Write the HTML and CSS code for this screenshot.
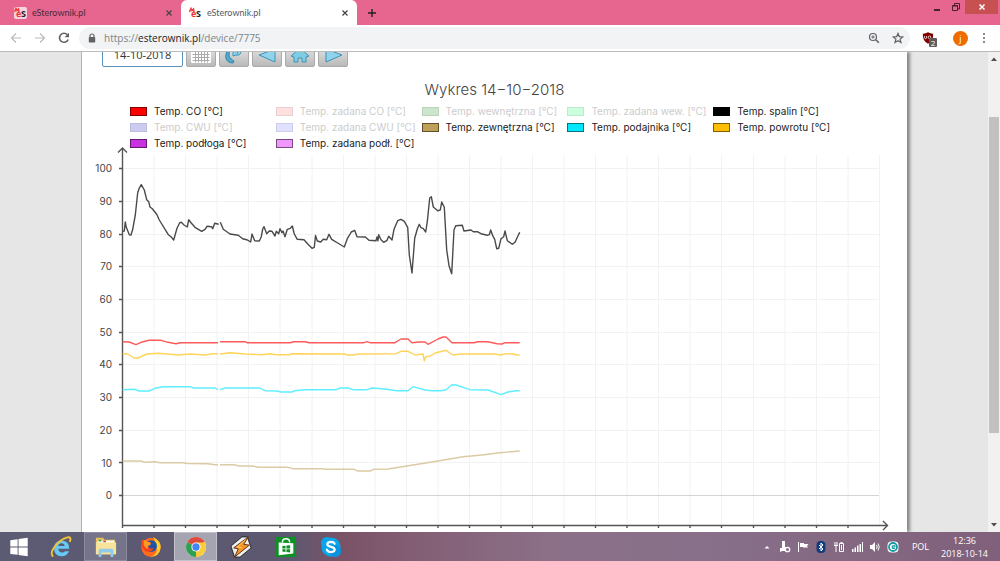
FILE: index.html
```
<!DOCTYPE html>
<html lang="pl">
	<head>
		<meta charset="UTF-8" />
		<meta name="viewport" content="width=device-width, initial-scale=1.0" />
		<title>eSterownik.pl</title>
		<link rel="stylesheet" href="styles.css">
	</head>
	<body>
		<header class="tabs">
			<div class="tab">
				<svg class="favicon" viewBox="0 0 13 12"><rect width="13" height="12" rx="2" fill="#f6d3df"/><path d="M.5 5L2 1.500l1 2L4.500 2l.5 3" fill="none" stroke="#f03a3a" stroke-width="1.500"/><text x="2" y="10" class="fav-e">e</text><text x="7" y="10" class="fav-s">S</text></svg>
				<span class="tab-name">eSterownik.pl</span>
				<button class="tab-close" aria-label="Zamknij kartę"><svg viewBox="0 0 8 8"><path d="M1.5 1.5l5 5m0-5l-5 5"/></svg></button>
			</div>
			<div class="tab active">
				<svg class="favicon" viewBox="0 0 13 12"><path d="M.5 5L2 1.500l1 2L4.500 2l.5 3" fill="none" stroke="#f03a3a" stroke-width="1.500"/><text x="2" y="10" class="fav-e">e</text><text x="7" y="10" class="fav-s">S</text></svg>
				<span class="tab-name">eSterownik.pl</span>
				<button class="tab-close" aria-label="Zamknij kartę"><svg viewBox="0 0 8 8"><path d="M1.5 1.5l5 5m0-5l-5 5"/></svg></button>
			</div>
			<button class="new-tab" aria-label="Nowa karta"><svg viewBox="0 0 10 10"><path d="M5 1v8M1 5h8"/></svg></button>
			<div class="window-buttons">
				<button aria-label="Minimalizuj"><svg viewBox="0 0 10 10"><path d="M2 8h6" stroke-width="2"/></svg></button>
				<button aria-label="Przywróć"><svg viewBox="0 0 10 10"><path d="M3.500 3V1.500h5V7H7M1.500 3.500h5v5h-5zM1.500 4h5"/></svg></button>
				<button class="window-close" aria-label="Zamknij"><svg viewBox="0 0 10 10"><path d="M2.500 2.500l5 5m0-5l-5 5" stroke-width="1.500"/></svg></button>
			</div>
		</header>

		<nav class="toolbar">
			<button class="nav muted" aria-label="Wstecz"><svg viewBox="0 0 12 12"><path d="M11 6H1.500M6 1.500L1.500 6 6 10.500"/></svg></button>
			<button class="nav muted" aria-label="Dalej"><svg viewBox="0 0 12 12"><path d="M1 6h9.500M6 1.500L10.500 6 6 10.500"/></svg></button>
			<button class="nav" aria-label="Odśwież"><svg viewBox="0 0 12 12"><path d="M10.200 7.500a4.500 4.500 0 1 1-.8-4.700" stroke-width="1.600"/><path d="M11 .8v4.400H6.600z" class="solid"/></svg></button>
			<div class="address">
				<svg class="lock" viewBox="0 0 8 10"><path d="M2 4.500V3a2 2 0 0 1 4 0v1.500" fill="none" stroke="#5f6368" stroke-width="1.200"/><rect x="0.800" y="4" width="6.400" height="5.500" rx="0.800" fill="#5f6368"/></svg>
				<span class="url">https://<b>esterownik.pl</b>/device/7775</span>
				<button class="nav" aria-label="Powiększenie"><svg viewBox="0 0 12 12"><circle cx="5" cy="5" r="3.500"/><path d="M7.800 7.800l3 3" stroke-width="1.600"/><path d="M3.300 5h3.400M5 3.300v3.400" stroke-width="1"/></svg></button>
				<button class="nav" aria-label="Zakładka"><svg viewBox="0 0 12 12"><path d="M6 1.400l1.300 3.200 3.500.3-2.700 2.200.9 3.400L6 8.700l-3 1.800.9-3.400L1.200 4.900l3.500-.3z"/></svg></button>
			</div>
			<button class="ublock" aria-label="uBlock"><svg viewBox="0 0 12 12"><path d="M6 .3q2.500 1.500 5.200 1.400Q11.500 9 6 11.800.500 9 .8 1.700 3.500 1.800 6 .3z" fill="#800000"/><path d="M2.600 4v1.600q0 1 1 1t1-1V4" fill="none" stroke="#fff" stroke-width=".8"/><circle cx="7.500" cy="5.300" r="1.300" fill="none" stroke="#fff" stroke-width=".8"/></svg><span class="count">2</span></button>
			<button class="avatar">j</button>
			<button class="more" aria-label="Menu"><svg viewBox="0 0 4 12"><circle cx="2" cy="2" r="1"/><circle cx="2" cy="6" r="1"/><circle cx="2" cy="10" r="1"/></svg></button>
		</nav>

		<div class="viewport">
			<main class="page">
				<form class="date-bar">
					<input class="date" type="text" value="14-10-2018" aria-label="Data" />
					<button type="button" aria-label="Kalendarz"><svg viewBox="0 0 28 20"><rect x="4" y="1" width="20" height="16" rx="1" fill="#fff"/><path d="M4 2h20v4H4z" fill="#5fb4d2"/><path d="M5.500 8.500h17m-17 3h17m-17 3h17M8.500 6v10.500m3-10.500v10.500m3-10.500v10.500m3-10.500v10.500m3-10.500v10.500" stroke="#aaa"/></svg></button>
					<button type="button" aria-label="Odśwież"><svg viewBox="0 0 28 20"><path d="M13 17C5 17 4 9 8 4l2 1c-2 4-1 7 4 10z" fill="#4fa9cd" stroke="#3284ab"/><path d="M13 10V5l3 1 3-3 2 3q-1 4-5 3zM17 3q2 3 0 5" fill="#8fd4ea" stroke="#3c93b9"/></svg></button>
					<button type="button" aria-label="Poprzedni dzień"><svg viewBox="0 0 28 20"><path d="M6 9L22 3v13z" fill="#91d3ea" stroke="#3c93b9"/></svg></button>
					<button type="button" aria-label="Dzisiaj"><svg viewBox="0 0 28 20"><path d="M14 2l9 8-3 1v5h-4v-4h-4v4H8v-5l-3-1z" fill="#7ecde2" stroke="#3c93b9"/></svg></button>
					<button type="button" aria-label="Następny dzień"><svg viewBox="0 0 28 20"><path d="M23 9L7 3v13z" fill="#91d3ea" stroke="#3c93b9"/></svg></button>
				</form>

				<h1>Wykres 14−10−2018</h1>

				<ul class="legend">
					<li><i class="swatch co"></i>Temp. CO [°C]</li>
					<li class="off"><i class="swatch co-set"></i>Temp. zadana CO [°C]</li>
					<li class="off"><i class="swatch inside"></i>Temp. wewnętrzna [°C]</li>
					<li class="off"><i class="swatch inside-set"></i>Temp. zadana wew. [°C]</li>
					<li><i class="swatch fumes"></i>Temp. spalin [°C]</li>
					<li class="off"><i class="swatch cwu"></i>Temp. CWU [°C]</li>
					<li class="off"><i class="swatch cwu-set"></i>Temp. zadana CWU [°C]</li>
					<li><i class="swatch outside"></i>Temp. zewnętrzna [°C]</li>
					<li><i class="swatch feeder"></i>Temp. podajnika [°C]</li>
					<li><i class="swatch return"></i>Temp. powrotu [°C]</li>
					<li><i class="swatch floor"></i>Temp. podłoga [°C]</li>
					<li><i class="swatch floor-set"></i>Temp. zadana podł. [°C]</li>
				</ul>

				<svg class="chart" viewBox="82 149 825 390" role="img" aria-label="Wykres temperatur">
					<!-- one line per hour, one line per 10 degrees -->
					<path class="grid" d="M154 155v370M185.500 155v370M217 155v370M248.500 155v370M280 155v370M312 155v370M343.500 155v370M375 155v370M406.500 155v370M438 155v370M469.500 155v370M501 155v370M532.500 155v370M564 155v370M595.500 155v370M627 155v370M658.500 155v370M690 155v370M721.500 155v370M753.500 155v370M785 155v370M816.500 155v370M848 155v370M879.500 155v370"/>
					<path class="grid" d="M122 168.500h757M122 201.500h757M122 234.500h757M122 266.500h757M122 299.500h757M122 332.500h757M122 364.500h757M122 397.500h757M122 430.500h757M122 462.500h757"/>
					<path class="zero" d="M122 495.500h757"/>
					<path class="axis" d="M122.500 525V148M118 152.500l4.500-4.500 4.500 4.500M122 525.500h765M883 521l4.500 4.500-4.500 4.500"/>
					<path class="axis" d="M119 168.500h3M119 201.500h3M119 234.500h3M119 266.500h3M119 299.500h3M119 332.500h3M119 364.500h3M119 397.500h3M119 430.500h3M119 462.500h3M119 495.500h3"/>
					<path class="axis" d="M122.500 525v3M154 525v3M185.500 525v3M217 525v3M248.500 525v3M280 525v3M312 525v3M343.500 525v3M375 525v3M406.500 525v3M438 525v3M469.500 525v3M501 525v3M532.500 525v3M564 525v3M595.500 525v3M627 525v3M658.500 525v3M690 525v3M721.500 525v3M753.500 525v3M785 525v3M816.500 525v3M848 525v3"/>
					<g class="scale">
						<text x="112" y="172">100</text>
						<text x="112" y="205">90</text>
						<text x="112" y="238">80</text>
						<text x="112" y="270">70</text>
						<text x="112" y="303">60</text>
						<text x="112" y="336">50</text>
						<text x="112" y="368">40</text>
						<text x="112" y="401">30</text>
						<text x="112" y="434">20</text>
						<text x="112" y="467">10</text>
						<text x="112" y="499">0</text>
					</g>
					<path class="line fumes-line" d="M122.700 231.300L124.300 231 125.300 222 126.300 227.300 129.300 234.700 131 235 132.700 229.300 135.300 215 137.700 192.700 139.300 188 141.300 184.700 144.300 190 146.700 199.700 148.700 201.700 150 207 152.300 208.700 156.700 214.300 159.300 220 168.300 234.700 171 236.700 173.700 240 177 228.300 179.700 222.700 181.300 222.300 184 225 187.300 227 188.700 219.700 191 222.700 195 227.300 201.700 231.300 205 229.300 207 226.300 211.500 226.700 212.700 228.700 214.700 223.300 218.700 224.300M220.300 222.300L223.300 229.300 230 234 238.300 235.300 242.700 238.700 246.700 239.700 250.700 242 252 234 254.700 240.700 259.300 241 261.300 236.700 262.700 229 264 226.700 266.700 233.700 269.300 231 272 231.300 275 236 276.300 231.300 278.700 233.700 280 228.700 282 232.700 283 231 285 236.700 287.300 229.300 290.300 228.300 292.300 226 294.300 234 297.300 239.300 304 239.700 308 244.300 312 248.300 314.300 247.300 315.500 235.500 317.300 241 320.700 242 323.300 239.300 326.700 239.700 329 234.300 331.700 239.300 337.700 243 344.300 247 347.300 238.700 351.300 232 354.700 230.300 357 236.700 365.300 237 369 240.300 376 240.700 377 237 378 240.700 378.700 234.700 381 239.700 383.700 242.300 387 240.300 388.700 236.300 392 240 394 229.300 397.700 220.700 401 219.300 404.300 221.300 407.700 227.300 409.300 255 412 273 414.700 238.300 417.300 229 419.300 224.300 421 227.700 423.300 228.700 425.700 232 427.300 221.700 429.700 198 431.300 196.700 433.300 207 437.700 210.700 440.300 210 441.700 202 444.300 207.300 446.700 250 449 265.700 451.700 273.700 454 230 455.700 225.700 462.300 225.300 464 231 471 230 473.300 231.700 477.300 231.700 481 233.700 487.300 235.300 489.300 234.700 490.700 230 492.700 235.700 494.700 239.300 496.700 248.700 498.700 248.300 501 238.700 503.700 236.700 505 231 507.300 240.700 512.300 244.300 515 242.300 519.700 232.300"/>
					<path class="line co-line" d="M122.700 341.700L129 342 136 344.700 141 342.300 149 340.300 161 340.300 168 342.300 176 343.700 180 342.700 218 342.700M220 341.700L245 341.700 247 342.700 290 342.700 294 341.700 305 341.700 309 342.700 364 342.700 367 341.700 370 342.700 395 342.700 401 339 408 339 412 342.700 419 342 425 342 428 344.300 438 339 443 337 446 337 452 342.700 474 342.700 478 341.700 488 341.700 497 343.700 502 344 505 342.700 519.700 342.700"/>
					<path class="line return-line" d="M122.700 353.700L128 354 134 358 138 358 147 354 158 353.300 170 354.300 178 355 190 354 205 355 213 353.700 218 353.700M220 354L230 352.700 245 354 262 354.700 270 353.700 276 354.700 289 354.700 293 353.700 344 354 348 355 354 355 358 354 396 353.700 401 351.300 408 351.300 415 355 423 354 424.300 361 425.500 357 430 356 436 352.700 446 350.300 453 355 460 354 495 354 500 355 506 353.700 514 354 516 355 519.700 355"/>
					<path class="line feeder-line" d="M122.700 389.700L135 389.300 139 391 149 391 155 388.300 163 386.700 190 386.700 194 388 215 388 218 389.700M220 389.700L225 388 260 388 265 390.700 277 391 281 392 292 392 295 390.700 305 389.700 336 389.700 341 388 348 388 353 389.700 367 389.700 372 388 385 389 390 389.700 397 390.700 408 390.700 413 386.700 425 390 432 390.700 441 390.700 446 389.700 452 384.700 456 385 470 389.700 488 390 501 394.700 508 392 516 390.700 519.700 390.700"/>
					<path class="line outside-line" d="M122.700 461L141 461 145 462.300 155 461.700 160 462.700 183 462.700 187 463.500 208 463.700 215 464.700 218 464.700M220 464.700L234 464.700 239 466 253 466 258 467.300 288 467.300 293 468.700 322 468.700 327 469.300 354 469.300 358 471 370 471 374 469.300 388 469 410 465.500 438 461 463 456.700 482 455 500 452.700 519.700 451"/>
				</svg>
			</main>
			<div class="scrollbar">
				<svg viewBox="0 0 8 6"><path d="M1 5l3-3.500L7 5z"/></svg>
				<span class="thumb"></span>
				<svg viewBox="0 0 8 6"><path d="M1 1l3 3.500L7 1z"/></svg>
			</div>
		</div>

		<footer class="taskbar">
			<button class="app" aria-label="Start"><svg viewBox="0 0 24 24"><path d="M2.500 4.500l8-1v8h-8zM11.500 3.300l10-1.300v9.500h-10zM2.500 12.500h8v8l-8-1zM11.500 12.500h10V22l-10-1.300z" fill="#fff"/></svg></button>
			<button class="app" aria-label="Internet Explorer"><svg viewBox="0 0 24 24"><path d="M21 14H9q.3 4 4.200 4 2.300 0 3.300-1.500h4.200q-2 5.500-8 5.500Q4.500 21.500 4.500 13.500t8-8.500Q21 5.500 21 14zM9 11h7q-.5-3-3.500-3T9 11z" fill="#67caf5"/><path d="M3.500 22.500C-2 18 9 4 19 1.500q5-1 2.500 5" fill="none" stroke="#f3c433" stroke-width="2"/></svg></button>
			<button class="app open" aria-label="Eksplorator plików"><svg viewBox="0 0 24 24"><path d="M1 2h8l1 2h12v16H1z" fill="#e9c35c"/><path d="M3 5h18v3H3z" fill="#fff"/><path d="M4 4h3v2H4z" fill="#4ca545"/><path d="M9 5h3v2H9z" fill="#d54b35"/><path d="M1 7h22v13H1z" fill="#f8e39a"/><path d="M4 23v-7q0-2 2-2h12q2 0 2 2v7h-3v-5H7v5z" fill="#8fcbea"/></svg></button>
			<button class="app" aria-label="Firefox"><svg viewBox="0 0 24 24"><circle cx="12" cy="12.500" r="10.500" fill="#ff6a1f"/><path d="M14 1q9 4 8.500 12Q21 22.500 11 22.500q9-2 7-10Q17 5 14 1z" fill="#ffce2e"/><circle cx="12" cy="11" r="6.500" fill="#1d55a5"/><path d="M1.500 4L7 6l5 1q0 3-3 3 0 5 6 3-2 5-7 4T1.500 10z" fill="#f9431d"/><path d="M4 4l4 2q5 1 3 4-4 0-2 4-4-1-5-5z" fill="#ff9b21"/></svg></button>
			<button class="app open current" aria-label="Chrome"><svg viewBox="0 0 24 24"><circle cx="12" cy="12" r="11" fill="#fff"/><path d="M12 12L2.500 6.500a11 11 0 0 1 19 0z" fill="#de4b3c"/><path d="M12 12l9.500-5.500A11 11 0 0 1 12 23z" fill="#fbcc3a"/><path d="M12 12v11A11 11 0 0 1 2.500 6.500z" fill="#2ea052"/><path d="M12 7h9.700L12 23l4.300-8.500z" fill="#fbcc3a"/><circle cx="12" cy="12" r="5" fill="#fff"/><circle cx="12" cy="12" r="4" fill="#4286f2"/></svg></button>
			<button class="app" aria-label="Winamp"><svg viewBox="0 0 24 24"><path d="M1 11L13 1h6l4 12-12 10H5z" fill="#eee" stroke="#222"/><path d="M20 1L4 13l5 1-4 9 16-13-6-1z" fill="#f69526" stroke="#5b2a10"/><path d="M17 4l-9 8 5 1" fill="none" stroke="#ffd66b"/></svg></button>
			<button class="app" aria-label="Sklep"><svg viewBox="0 0 24 24"><path d="M1 1h22v22H1z" fill="#0d9024"/><path d="M4 7l16 1v11l-16 2z" fill="#fff"/><path d="M8 7q0-4 4-4t4 4" fill="none" stroke="#fff" stroke-width="1.500"/><path d="M8 11l3.500-.5v3H8zM12.500 10.400l4-.4v3.500h-4zM8 14.500h3.500v3L8 17zM12.500 14.500h4V18l-4-.5z" fill="#0d9024"/></svg></button>
			<button class="app" aria-label="Skype"><svg viewBox="0 0 24 24"><circle cx="12" cy="12" r="10.500" fill="#0aa5ea"/><circle cx="7.500" cy="7.500" r="6.500" fill="#0aa5ea"/><circle cx="16.500" cy="16.500" r="6.500" fill="#0a94e0"/><path d="M16 8.500Q15 6.500 12 6.500 8 6.600 8 9q0 2 4 2.800t4 3q0 2.700-4 2.700-3.500 0-4.500-2.500" fill="none" stroke="#fff" stroke-width="2.400" stroke-linecap="round"/></svg></button>

			<div class="tray">
				<svg viewBox="0 0 12 12"><path d="M3.500 7.500L6 5l2.500 2.500z"/></svg>
				<svg viewBox="0 0 12 12"><path d="M3 0h3v6h1v4H3L1 11V7h2z"/><circle cx="8.500" cy="8.500" r="2.200" fill="none" stroke="#fff" stroke-width="1.300"/></svg>
				<svg viewBox="0 0 12 12"><path d="M1 1h1v10H1zM3 2h4v1h4.500L10 5l1 1.500H6V6H3z"/></svg>
				<svg viewBox="0 0 12 12"><rect x="1.500" width="9" height="12" rx="4" fill="#123c7b"/><path d="M4 4l4 4-2 2V2l2 2-4 4" fill="none" stroke="#fff"/></svg>
				<svg viewBox="0 0 12 12"><path d="M2 1v3M4 1v3M1 4.500h4M3 5v6" stroke="#fff"/><path d="M6.500 2.500h4v8h-4zM7.500 1.500h2M8.500 4v5" fill="none" stroke="#fff"/></svg>
				<svg viewBox="0 0 12 12"><path d="M1 8h1.500v3H1zM3.500 6.500H5V11H3.500zM6 4.500h1.500V11H6zM8.500 3H10v8H8.500zM11 1h1v10h-1z"/></svg>
				<svg viewBox="0 0 12 12"><path d="M1 4h2l3-3v10L3 8H1z"/><path d="M7.500 4q1.500 2 0 4M9 2.500q2.500 3.500 0 7" fill="none" stroke="#fff"/></svg>
				<svg viewBox="0 0 12 12"><rect x="0.500" y="0.500" width="11" height="11" rx="4" fill="#fff"/><circle cx="6" cy="6" r="4" fill="none" stroke="#159ba4" stroke-width="1.800"/><path d="M4.500 6h3.500v-1.300H5.500v2.800H8" fill="none" stroke="#159ba4"/></svg>
				<span class="lang">POL</span>
				<time class="clock" datetime="2018-10-14T12:36">12:36<br>2018-10-14</time>
			</div>
		</footer>
	</body>
</html>
```
FILE: styles.css
```
* {
	box-sizing: border-box;
}
body {
	margin: 0;
	height: 100vh;
	display: flex;
	flex-direction: column;
	overflow: hidden;
	font-family: "Open Sans", "Noto Sans", sans-serif;
	font-size: 9px;
	background: #e6e6e6;
}
button {
	border: none;
	padding: 0;
	background: none;
	font: inherit;
	display: flex;
	align-items: center;
	justify-content: center;
}
svg {
	display: block;
}

/* browser tabs */
.tabs {
	flex: none;
	display: flex;
	height: 25px;
	background: #e6668f;
}
.tab {
	display: flex;
	align-items: center;
	width: 181px;
	padding: 0 8px 0 14px;
	color: #4a2a38;
}
.tab.active {
	width: 176px;
	background: #fff;
	border-radius: 6px 6px 0 0;
	padding: 0 8px;
	color: #55585c;
}
.favicon {
	width: 13px;
	height: 12px;
	margin-right: 5px;
}
.fav-e,
.fav-s {
	font: bold 9px "Open Sans", sans-serif;
	fill: #e33;
}
.fav-s {
	fill: #222;
}
.tab-name {
	flex: 1;
	font-family: Lato, sans-serif;
}
.tab-close svg {
	width: 8px;
	height: 8px;
	stroke: #444;
	stroke-width: 1.2;
}
.new-tab {
	width: 30px;
}
.new-tab svg {
	width: 10px;
	height: 10px;
	stroke: #222;
	stroke-width: 1.4;
}
.window-buttons {
	display: flex;
	height: 14px;
	margin-left: auto;
	margin-right: 2px;
}
.window-buttons button {
	width: 19px;
}
.window-buttons svg {
	width: 10px;
	height: 10px;
	fill: none;
	stroke: #4a2030;
}
.window-buttons .window-close {
	width: 33px;
	background: #c75050;
}
.window-buttons .window-close svg {
	stroke: #fff;
}

/* address bar */
.toolbar {
	flex: none;
	display: flex;
	align-items: center;
	height: 27px;
	padding: 0 14px 0 10px;
	background: #fff;
	border-bottom: 1px solid #bbb;
}
.nav {
	width: 12px;
	margin-right: 12px;
}
.nav svg {
	width: 12px;
	height: 12px;
	fill: none;
	stroke: #5f6368;
	stroke-width: 1.2;
}
.nav.muted svg {
	stroke: #b8babd;
}
.nav .solid {
	fill: #5f6368;
	stroke: none;
}
.address {
	flex: 1;
	display: flex;
	align-items: center;
	height: 22px;
	margin-left: -3px;
	padding: 0 6px 0 9px;
	border-radius: 11px;
	background: #f1f3f4;
	color: #808488;
	font-size: 10px;
}
.address .nav:last-child {
	margin-right: 0;
}
.lock {
	width: 8px;
	height: 10px;
	margin-right: 8px;
}
.url {
	flex: 1;
}
.url b {
	font-weight: 400;
	color: #222;
}
.ublock {
	position: relative;
	margin-left: 12px;
}
.ublock svg {
	width: 12px;
	height: 12px;
}
.count {
	position: absolute;
	left: 7px;
	top: 6px;
	width: 8px;
	border-radius: 1px;
	background: #5c5c5c;
	color: #fff;
	font-size: 8px;
	line-height: 9px;
}
.avatar {
	width: 15px;
	height: 15px;
	margin: 0 14px 0 19px;
	border-radius: 50%;
	background: #ef6c00;
	color: #fff;
}
.more svg {
	width: 4px;
	height: 12px;
	fill: #5f6368;
}

/* page */
.viewport {
	flex: 1;
	min-height: 0;
	display: flex;
	overflow: hidden;
	background: #e6e6e6;
}
.page {
	flex: 1;
	margin: 0 81px 0 82px;
	background: #fff;
	box-shadow: -1px 0 0 #b4b4b4, 3px 0 3px #888;
}
.date-bar {
	display: flex;
	align-items: flex-end;
	gap: 3px;
	height: 15px;
	padding-left: 20px;
	overflow: hidden;
}
.date-bar .date {
	width: 81px;
	height: 24px;
	padding: 0 0 2px;
	border: 1px solid #5c93bd;
	border-radius: 2px;
	text-align: center;
	font: 11px "Open Sans", sans-serif;
	color: #333;
}
.date-bar button {
	width: 30px;
	height: 22px;
	border: 1px solid #aaa;
	border-radius: 2px;
	background: linear-gradient(#e6e6e6, #b9b9b9);
}
.date-bar svg {
	width: 28px;
	height: 20px;
}
h1 {
	margin: 14px 0 6px;
	text-align: center;
	font: 15px/18px Inter, sans-serif;
	font-weight: 300;
	color: #444;
}
.legend {
	display: grid;
	grid-template-columns: repeat(5, 1fr);
	row-gap: 4px;
	margin: 0;
	padding: 0 48px;
	list-style: none;
	font: 10px/12px Inter, sans-serif;
	color: #222;
}
.legend li {
	display: flex;
	align-items: center;
	gap: 7px;
	white-space: nowrap;
}
.legend .off {
	color: #ccc;
}
.swatch {
	width: 17px;
	height: 9px;
	border: 1px solid rgba(0, 0, 0, 0.5);
}
.off .swatch {
	border-color: rgba(0, 0, 0, 0.08);
}
.co { background: #ff0000; }
.co-set { background: #ffe0e0; }
.inside { background: #cce6cc; }
.inside-set { background: #ccffdd; }
.fumes { background: #000; }
.cwu { background: #ccccf0; }
.cwu-set { background: #e0e0ff; }
.outside { background: #c0a058; }
.feeder { background: #00e8ff; }
.return { background: #ffbf00; }
.floor { background: #c832e0; }
.floor-set { background: #f096ff; }

/* chart */
.chart {
	width: 100%;
	height: auto;
	overflow: visible;
}
.grid {
	stroke: #f2f2f2;
}
.zero {
	stroke: #d4d4d4;
}
.axis {
	fill: none;
	stroke: #555;
	stroke-width: 1.4;
}
.scale {
	font: 10px Inter, sans-serif;
	fill: #444;
	text-anchor: end;
}
.line {
	fill: none;
	stroke-linejoin: round;
	stroke-width: 1.4;
}
.fumes-line { stroke: #4a4a4a; }
.co-line { stroke: #ff5a5a; }
.return-line { stroke: #ffd45a; }
.feeder-line { stroke: #5eefff; }
.outside-line { stroke: #dccaa4; }

.scrollbar {
	flex: none;
	display: flex;
	flex-direction: column;
	align-items: center;
	justify-content: space-between;
	width: 12px;
	padding: 4px 0;
	background: #f1f1f1;
}
.scrollbar svg {
	width: 8px;
	height: 6px;
	fill: #505050;
}
.thumb {
	width: 10px;
	height: 67%;
	margin-bottom: 34px;
	background: #c1c1c1;
}

/* taskbar */
.taskbar {
	flex: none;
	display: flex;
	align-items: stretch;
	height: 29px;
	background: linear-gradient(90deg, #5b5b73, #5d5870 29%, #7a5266 34%, #835f75 42%, #8b7088 55%, #88708a 70%, #80607a);
}
.app {
	width: 43px;
	margin-right: 2px;
	border: 1px solid transparent;
}
.app:first-child {
	width: 37px;
}
.app svg {
	width: 22px;
	height: 22px;
}
.app.open {
	background: #76748a;
	border-color: #8d8b9d;
}
.app.current {
	background: #a5a4b1;
	border-color: #c3c2cc;
}
.tray {
	display: flex;
	align-items: center;
	gap: 6px;
	margin-left: auto;
	padding-right: 12px;
	color: #fff;
}
.tray svg {
	width: 12px;
	height: 12px;
	fill: #fff;
}
.lang {
	margin-left: 7px;
}
.clock {
	margin-left: 6px;
	text-align: center;
	line-height: 13px;
}
```
